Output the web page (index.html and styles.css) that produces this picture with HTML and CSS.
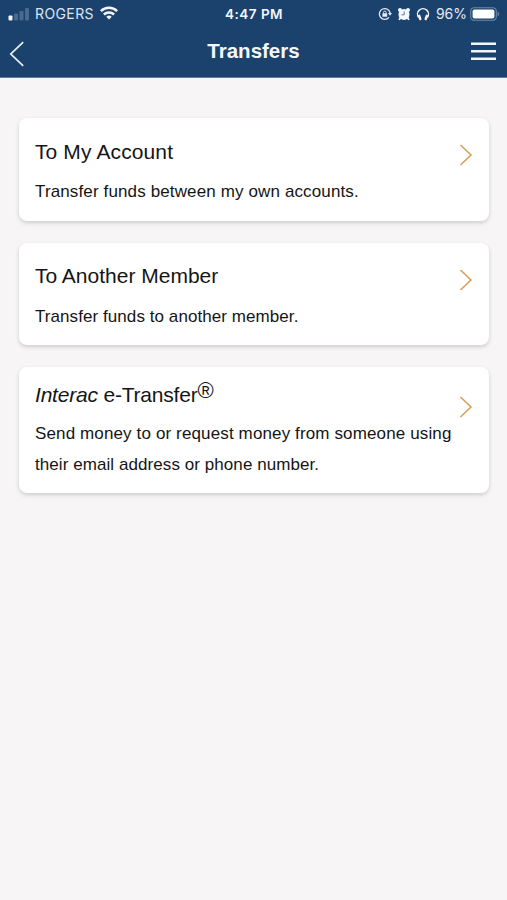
FILE: index.html
```html
<!DOCTYPE html>
<html lang="en">
<head>
<meta charset="utf-8">
<meta name="viewport" content="width=device-width, initial-scale=1">
<title>Transfers</title>
<link rel="stylesheet" href="styles.css">
</head>
<body>
<header class="top">
  <div class="status">
    <div class="status-left">
      <svg class="signal" width="22" height="14" viewBox="0 0 22 14"><rect x="0.5" y="8.5" width="4" height="5" rx="1" fill="#f3f7fc"/><g fill="#49698e"><rect x="6" y="6.5" width="4" height="7" rx="1"/><rect x="11.5" y="4" width="4" height="9.5" rx="1"/><rect x="17" y="1" width="4" height="12.5" rx="1"/></g></svg>
      <span class="carrier">ROGERS</span>
      <svg class="wifi" width="18" height="14" viewBox="0 0 18 14" fill="none" stroke="#f3f7fc" stroke-width="2.5"><path d="M.9 5.2a11.5 11.5 0 0 1 16.2 0M3.9 8.5a7.2 7.2 0 0 1 10.2 0"/><path d="M9 13.5 6.3 10.7a3.9 3.9 0 0 1 5.4 0Z" fill="#f3f7fc" stroke="none"/></svg>
    </div>
    <time class="clock">4:47 PM</time>
    <div class="status-right">
      <svg class="lock" width="14" height="14" viewBox="0 0 14 14" fill="none" stroke="#e3ebf5" stroke-width="1.3"><path d="M11 10.3A5.4 5.4 0 1 1 12.1 6.2"/><path d="M10 6h4l-2 2.8Z" fill="#e3ebf5" stroke="none"/><rect x="4.4" y="6.3" width="4.8" height="3.5" rx=".4" fill="#e3ebf5" stroke="none"/><path d="M5.5 6.4V5.4a1.3 1.3 0 0 1 2.6 0v1" stroke-width="1"/></svg>
      <svg class="alarm" width="14" height="14" viewBox="0 0 14 14"><g fill="#f3f7fc"><circle cx="7" cy="7.4" r="5.5"/><circle cx="3" cy="3" r="2"/><circle cx="11" cy="3" r="2"/><path d="m2.7 10-1.4 2.5 1.2.8 2-1.8ZM11.3 10l1.4 2.5-1.2.8-2-1.8Z"/></g><path d="M7.2 4.4v3.4H4.5" fill="none" stroke="#5f7c9e" stroke-width="1"/></svg>
      <svg class="phones" width="14" height="14" viewBox="0 0 14 14" fill="none" stroke="#f3f7fc"><path d="M2.6 10.5A5.5 5.5 0 1 1 11.4 10.5" stroke-width="1.4"/><path d="M3.2 8.8 4.3 12M10.8 8.8 9.7 12" stroke-width="2.4" stroke-linecap="round"/></svg>
      <span class="percent">96%</span>
      <svg class="battery" width="30" height="14" viewBox="0 0 30 14"><rect x=".7" y=".7" width="25.6" height="12.6" rx="3.6" fill="none" stroke="#7189a7" stroke-width="1.1"/><rect x="2.6" y="2.5" width="21.8" height="9" rx="1.8" fill="#fff"/><path d="M27.6 4.8c2 .7 2 3.7 0 4.4Z" fill="#7189a7"/></svg>
    </div>
  </div>
  <nav class="bar">
    <svg class="back" width="16" height="26" viewBox="0 0 16 26" fill="none" stroke="#e9f1fa" stroke-width="1.7"><path d="M14.2 1.2 1.8 13 14.2 24.8"/></svg>
    <h1 class="heading">Transfers</h1>
    <svg class="menu" width="25" height="19" viewBox="0 0 25 19" fill="#f4f8fc"><path d="M0 .5h25V3H0ZM0 8h25v2.5H0ZM0 15.5h25V18H0Z"/></svg>
  </nav>
</header>
<main class="list">
  <a class="card">
    <div class="copy"><h2 class="title roomy">To My Account</h2><p class="desc">Transfer funds between my own accounts.</p></div>
    <svg class="chevron" width="14" height="22" viewBox="0 0 14 22"><path d="M1.5 1 12 11 1.5 21"/></svg>
  </a>
  <a class="card">
    <div class="copy"><h2 class="title">To Another Member</h2><p class="desc snug">Transfer funds to another member.</p></div>
    <svg class="chevron" width="14" height="22" viewBox="0 0 14 22"><path d="M1.5 1 12 11 1.5 21"/></svg>
  </a>
  <a class="card tall">
    <div class="copy"><h2 class="title tight"><em>Interac</em> e-Transfer<span class="reg">®</span></h2><p class="desc">Send money to or request money from someone using<br><span class="snug">their email address or phone number.</span></p></div>
    <svg class="chevron" width="14" height="22" viewBox="0 0 14 22"><path d="M1.5 1 12 11 1.5 21"/></svg>
  </a>
</main>
</body>
</html>
```
FILE: styles.css
```css
* { box-sizing: border-box; }
body { margin: 0; min-height: 900px; background: #f7f5f6; color: #151515; font-family: "Liberation Sans", Arial, sans-serif; }
h1, h2, p { margin: 0; font-weight: 400; }
svg { display: block; flex: none; }
.top { height: 78px; background: #1b426d; border-bottom: 1px solid #617b99; color: #f3f7fc; }
.status { display: grid; grid-template-columns: 1fr auto 1fr; height: 27px; padding: 0 7px 0 8px; align-items: center; font: 14px/26px Inter, sans-serif; }
.status-left, .status-right { display: flex; align-items: center; }
.status-right { justify-content: flex-end; }
.carrier { margin-left: 5px; color: #dbe5f0; letter-spacing: .4px; }
.wifi { margin-left: 6px; margin-bottom: 2px; }
.clock { font-weight: 600; font-size: 13.5px; letter-spacing: .5px; }
.alarm { margin-left: 5px; }
.phones { margin-left: 5px; }
.percent { margin-left: 6px; color: #e3ebf5; }
.battery { margin-left: 3px; }
.bar { display: grid; grid-template-columns: 1fr auto 1fr; height: 50px; padding: 0 11px 0 9px; align-items: center; }
.back { margin-top: 4px; }
.heading { padding: 0 0 2px 2px; font-size: 20.5px; line-height: 46px; font-weight: 700; }
.menu { justify-self: end; margin-bottom: 2px; }
.list { display: flex; flex-direction: column; gap: 22px; padding: 40px 18.5px 0 19px; }
.card { display: flex; justify-content: space-between; height: 102.7px; padding: 18.6px 16px 0; border-radius: 8px; background: #fff; box-shadow: 0 2px 4px rgba(0,0,0,.17); }
.copy { flex: none; width: 418px; }
.title { font-size: 21px; line-height: 30px; white-space: nowrap; }
.roomy { letter-spacing: .12px; }
.tight { letter-spacing: -.2px; }
.desc { margin-top: 10.4px; font-size: 17px; line-height: 30.5px; letter-spacing: .13px; white-space: nowrap; }
.snug { letter-spacing: .07px; }
.chevron { margin-top: 7.5px; fill: none; stroke: #d6a059; stroke-width: 1.6; }
.tall { height: 125.7px; padding-top: 13px; }
.tall .desc { margin-top: 9px; }
.tall .chevron { margin-top: 16px; }
.reg { font-size: 22px; line-height: 0; position: relative; top: -4px; }
```
